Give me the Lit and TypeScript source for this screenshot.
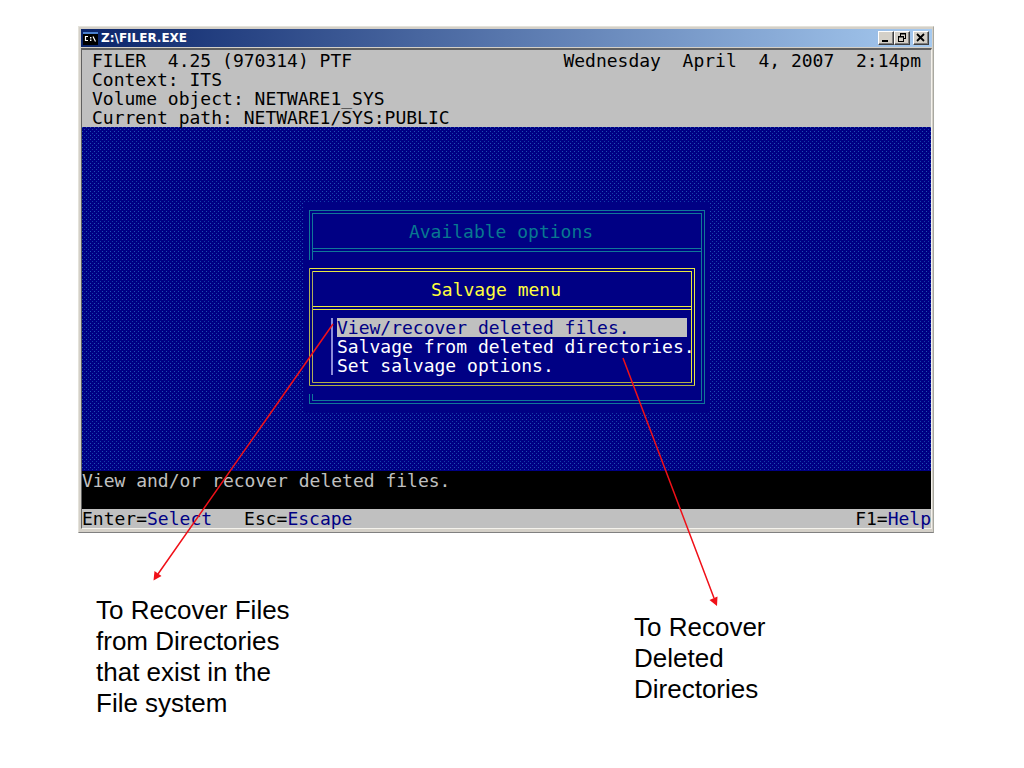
import { LitElement, html, css } from "lit";
import { customElement, state } from "lit/decorators.js";

@customElement("salvage-menu")
class SalvageMenu extends LitElement {
  static styles = css`
    :host { display: block; background: #000084; padding: 8px 5px 8px 6px; }
    .frame { border: 4px double #e8e840; border-left-color: #b0b058; border-bottom-color: #b0b048; }
    .title {
      margin: 0; height: 34px; line-height: 36px; padding-right: 12px;
      border-bottom: 4px double #e8e840; text-align: center;
      font-size: 18px; font-weight: 400; color: #ffff3c;
    }
    .items {
      list-style: none; margin: 8px 4px 7px 18px; padding: 0 0 0 4px;
      border-left: 2px solid #8c8cd8;
    }
    .item {
      display: block; width: 100%; height: 19px; padding: 0; border: 0;
      background: none; color: #fff; font: inherit; line-height: 19px;
      text-align: left; white-space: nowrap;
    }
    .item.active { background: #c0c0c0; color: #000084; }
  `;

  @state() selected = 0;
  items = ["View/recover deleted files.", "Salvage from deleted directories.", "Set salvage options."];

  render() {
    return html`<section class="frame">
      <h2 class="title">Salvage menu</h2>
      <ul class="items">
        ${this.items.map((t, i) => html`<li><button
          class="item ${i === this.selected ? "active" : ""}"
          @click=${() => (this.selected = i)}>${t}</button></li>`)}
      </ul>
    </section>`;
  }
}

@customElement("app-root")
class AppRoot extends LitElement {
  static styles = css`
    :host {
      display: block; position: relative; min-height: 100vh; box-sizing: border-box;
      padding: 26px 90px 32px 78px; background: #fff; color: #000;
      font-family: "Liberation Sans", Arial, sans-serif;
    }
    .window {
      background: #d4d0c8; padding: 2px 1px 3px 2px;
      border: 1px solid #e4e2da; border-right-color: #a8a8a0; border-bottom-color: #808080;
    }
    .titlebar {
      display: flex; align-items: center; height: 18px; padding: 0 3px 0 2px; gap: 3px;
      background: linear-gradient(90deg, #0a246a, #a6caf0);
    }
    .caption {
      flex: 1; margin: 0; color: #fff; font: bold 12px "DejaVu Sans", sans-serif;
    }
    .sys { display: block; width: 15px; height: 13px; }
    .controls { display: flex; }
    .ctl {
      width: 16px; height: 14px; padding: 0; display: grid; place-items: center;
      background: #d4d0c8; border: 1px solid; border-color: #fff #404040 #404040 #fff;
      box-shadow: inset -1px -1px #808080;
    }
    .ctl.close { margin-left: 3px; }
    .ctl svg { display: block; }
    .console {
      margin-top: 1px; border: 1px solid; border-width: 2px 1px 1px 1px;
      border-color: #606060 #f4f2ec #f4f2ec #606060;
      font: 18px/19px "DejaVu Sans Mono", monospace;
    }
    .header {
      display: flex; justify-content: space-between; background: #c0c0c0;
      padding: 1px 10px 0; height: 76px;
    }
    .line { margin: 0; white-space: pre; }
    .desk {
      display: flex; justify-content: center; padding: 76px 0 58px;
      background-color: #000084;
      background-image:
        conic-gradient(from 270deg at 1px 1px, #2050b4 90deg, transparent 90deg),
        conic-gradient(from 270deg at 1px 1px, #1440a8 90deg, transparent 90deg);
      background-size: 4px 4px;
      background-position: 0 0, 2px 2px;
    }
    .options { position: relative; width: 396px; padding: 7px 5px 9px 6px; background: #000084; }
    .options-frame { box-sizing: border-box; height: 194px; border: 4px double #107898; }
    .options-title {
      margin: 0; height: 34px; line-height: 36px; padding-right: 12px;
      border-bottom: 4px double #107898; text-align: center;
      font-size: 18px; font-weight: 400; color: #087890;
    }
    salvage-menu { position: absolute; left: 0; right: 10px; top: 57px; }
    .hint { height: 38px; background: #000; color: #c0c0c0; }
    .keys { display: flex; gap: 32px; height: 19px; background: #c0c0c0; }
    .key { padding: 0; border: 0; background: none; font: inherit; color: #000; }
    .key.help { margin-left: auto; }
    .action { color: #000084; }
    .notes {
      display: flex; justify-content: space-between; padding: 62px 148px 0 18px;
      font-size: 26px; line-height: 31px;
    }
    .note { margin: 0; width: 200px; }
    .note.narrow { width: 152px; padding-top: 17px; }
    .arrows { position: absolute; left: 0; top: 0; pointer-events: none; }
  `;

  render() {
    return html`
      <main class="window">
        <header class="titlebar">
          <svg class="sys" viewBox="0 0 15 13" aria-hidden="true">
            <rect width="15" height="13" fill="#000"/>
            <rect width="15" height="2" fill="#4a80d0"/>
            <path d="M5 4.5H2.5v4H5M10 4.5l2.5 5" fill="none" stroke="#fff" stroke-width="1.2"/>
            <path d="M7 5h1.4v1.4H7zM7 7.6h1.4V9H7z" fill="#fff"/>
          </svg>
          <h1 class="caption">Z:\\FILER.EXE</h1>
          <div class="controls">
            <button class="ctl" aria-label="Minimize">
              <svg width="12" height="10"><path d="M2 7h6v2H2z"/></svg>
            </button>
            <button class="ctl" aria-label="Restore">
              <svg width="12" height="10" fill="none" stroke="#000">
                <path d="M4 1h6M4.5 0v3M9.5 0v6M7 5.5h3M2 4h6M2.5 3v6M7.5 3v6M2 8.5h6"/>
                <path d="M4 .5h6M2 3.5h6"/>
              </svg>
            </button>
            <button class="ctl close" aria-label="Close">
              <svg width="12" height="10"><path d="M2 1l7 7M9 1L2 8" stroke="#000" stroke-width="1.8"/></svg>
            </button>
          </div>
        </header>
        <div class="console">
          <div class="header">
            <div>
              <p class="line">FILER  4.25 (970314) PTF</p>
              <p class="line">Context: ITS</p>
              <p class="line">Volume object: NETWARE1_SYS</p>
              <p class="line">Current path: NETWARE1/SYS:PUBLIC</p>
            </div>
            <p class="line">Wednesday  April  4, 2007  2:14pm</p>
          </div>
          <div class="desk">
            <div class="options">
              <div class="options-frame"><h2 class="options-title">Available options</h2></div>
              <salvage-menu></salvage-menu>
            </div>
          </div>
          <div class="hint">View and/or recover deleted files.</div>
          <footer class="keys"><button class="key">Enter=<span class="action">Select</span></button><button class="key">Esc=<span class="action">Escape</span></button><button class="key help">F1=<span class="action">Help</span></button></footer>
        </div>
      </main>
      <div class="notes">
        <p class="note">To Recover Files from Directories that exist in the File system</p>
        <p class="note narrow">To Recover Deleted Directories</p>
      </div>
      <svg class="arrows" width="1024" height="768" aria-hidden="true">
        <g stroke="#f01018" stroke-width="1.5" fill="none">
          <path d="M333 324L158 574M623 358L714 598"/>
        </g>
        <path d="M153.5 580.5L154.5 571L161.5 576zM717 606L709.5 600L717.5 596.5z" fill="#f01018"/>
      </svg>
    `;
  }
}
